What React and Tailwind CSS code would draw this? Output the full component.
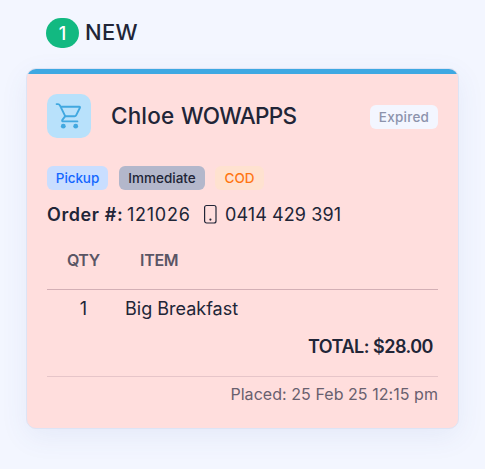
import clsx from 'clsx'

const order = {
  customer: 'Chloe WOWAPPS',
  number: '121026',
  phone: '0414 429 391',
  items: [{ qty: 1, name: 'Big Breakfast' }],
  total: '$28.00',
  placed: '25 Feb 25 12:15 pm',
}

function CartIcon() {
  return (
    <svg width="44" height="44" viewBox="0 0 44 44" fill="none" stroke="#41a8e0" strokeWidth="1.9" strokeLinecap="round" strokeLinejoin="round">
      <path d="M9.6 10.1h1.4c.9 0 1.5.5 1.9 1.3L18.2 22.2H27.6c.7 0 1.2-.3 1.5-.9L32.9 13.8c.3-.6 0-1.1-.6-1.1H13.6" />
      <path d="M18.2 22.2l-2.8 3.6c-.6.9-.2 1.6.8 1.6h14.2" />
      <circle cx="16.3" cy="32.2" r="2.4" fill="#41a8e0" stroke="none" />
      <circle cx="28.7" cy="32.2" r="2.4" fill="#41a8e0" stroke="none" />
    </svg>
  )
}

function PhoneIcon() {
  return (
    <svg width="14" height="20" viewBox="0 0 14 20" fill="none" stroke="#212537" strokeWidth="1.2">
      <rect x="1.6" y="1.5" width="11.4" height="17.5" rx="2" />
      <circle cx="7.4" cy="15.6" r="1.1" fill="#212537" stroke="none" />
    </svg>
  )
}

function Tag({ className, children }) {
  return (
    <span className={clsx('flex h-6 items-center justify-center rounded-md text-[13.5px] font-medium', className)}>
      {children}
    </span>
  )
}

export default function App() {
  return (
    <div className="h-[469px] w-[485px] overflow-hidden bg-[#f3f6ff] pt-[17px] font-['Inter',sans-serif] text-[#212537]">
      <header className="ml-[46px] flex h-[31px] items-center">
        <span className="flex h-[30px] w-[33px] items-center justify-center rounded-full bg-[#12b981] pt-0.5 text-[18px] font-medium text-white">1</span>
        <h1 className="ml-[6px] text-[22px] font-medium tracking-[0.3px]">NEW</h1>
      </header>

      <section className="mt-5 ml-[26px] h-[361px] w-[433px] overflow-hidden rounded-[10px] border border-[#dde4f5] bg-[#ffdedd] shadow-[0_8px_28px_rgba(70,90,170,0.08)]">
        <div className="h-[5px] bg-[#3ea8e2]" />
        <div className="px-5 pt-5">
          <div className="flex h-11 items-center">
            <div className="size-11 rounded-[10px] bg-[#b8e1fb]">
              <CartIcon />
            </div>
            <h2 className="ml-5 flex text-[22.5px] font-medium">
              <span className="w-[70px] tracking-[0.15px]">Chloe</span>
              <span className="tracking-[-0.65px]">WOWAPPS</span>
            </h2>
            <Tag className="mt-0.5 ml-auto w-[68px] bg-[#f3f6ff] tracking-[0.25px] text-[#8c93ac]">Expired</Tag>
          </div>

          <div className="mt-7 flex">
            <Tag className="w-[61px] bg-[#c9deff] tracking-[-0.1px] text-[#1467ff]">Pickup</Tag>
            <Tag className="ml-[11px] w-[86px] bg-[#b3b7cb] text-[#212537]">Immediate</Tag>
            <Tag className="ml-[10px] w-[49px] bg-[#ffe2d0] text-[#ff7613]">COD</Tag>
          </div>

          <div className="mt-[11px] flex h-[26px] items-center text-[18px]">
            <b className="w-[75px] font-semibold tracking-[0.6px] whitespace-nowrap">Order #:</b>
            <span className="ml-[5px] w-[64px] tracking-[0.75px]">{order.number}</span>
            <span className="ml-[12px]"><PhoneIcon /></span>
            <span className="ml-[8px] tracking-[0.08px]">{order.phone}</span>
          </div>

          <div className="mt-[19px] flex h-[44px] border-b border-[#d3afb5] pt-0.5 text-[16px] font-semibold text-[#5a5564]">
            <span className="ml-5 w-[73px] tracking-[-0.5px]">QTY</span>
            <span className="tracking-[-0.3px]">ITEM</span>
          </div>
          {order.items.map((item) => (
            <div key={item.name} className="flex h-[38px] items-center pb-0.5 text-[18px]">
              <span className="w-[73px] text-center">{item.qty}</span>
              <span className="ml-[5px]">{item.name}</span>
            </div>
          ))}
          <div className="flex h-[49px] justify-end border-b border-[#e6c5c9] pt-[5px] pr-[5px] text-[18px] font-semibold tracking-[-0.5px]">
            TOTAL: {order.total}
          </div>
          <div className="flex h-[34px] items-center justify-end text-[16px] tracking-[0.05px] text-[#69606e]">
            Placed: {order.placed}
          </div>
        </div>
      </section>
    </div>
  )
}
